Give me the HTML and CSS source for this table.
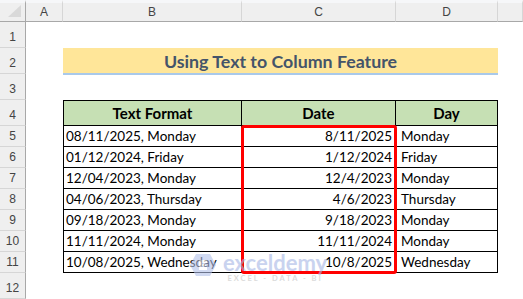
FILE: index.html
```html
<!DOCTYPE html>
<html lang="en">
<head>
    <meta charset="UTF-8">
    <meta name="viewport" content="width=device-width, initial-scale=1.0">
    <title>Using Text to Column Feature</title>
    <link rel="stylesheet" href="styles.css">
</head>
<body>
    <div class="sheet">
        <!-- column headers -->
        <div class="corner">
            <svg width="14" height="13" viewBox="0 0 14 13"><polygon points="13,0 13,12 0,12" fill="#d9d9d9"/></svg>
        </div>
        <div class="col-head">A</div>
        <div class="col-head">B</div>
        <div class="col-head">C</div>
        <div class="col-head">D</div>
        <div class="col-head"></div>

        <div class="row-head">1</div>

        <div class="row-head">2</div>
        <div class="title">Using Text to Column Feature</div>

        <div class="row-head">3</div>

        <div class="row-head">4</div>
        <div class="cell col-b th">Text Format</div>
        <div class="cell col-c th">Date</div>
        <div class="cell col-d th">Day</div>

        <div class="row-head">5</div>
        <div class="cell col-b">08/11/2025, Monday</div>
        <div class="cell col-c">8/11/2025</div>
        <div class="cell col-d">Monday</div>

        <div class="row-head">6</div>
        <div class="cell col-b">01/12/2024, Friday</div>
        <div class="cell col-c">1/12/2024</div>
        <div class="cell col-d">Friday</div>

        <div class="row-head">7</div>
        <div class="cell col-b">12/04/2023, Monday</div>
        <div class="cell col-c">12/4/2023</div>
        <div class="cell col-d">Monday</div>

        <div class="row-head">8</div>
        <div class="cell col-b">04/06/2023, Thursday</div>
        <div class="cell col-c">4/6/2023</div>
        <div class="cell col-d">Thursday</div>

        <div class="row-head">9</div>
        <div class="cell col-b">09/18/2023, Monday</div>
        <div class="cell col-c">9/18/2023</div>
        <div class="cell col-d">Monday</div>

        <div class="row-head">10</div>
        <div class="cell col-b">11/11/2024, Monday</div>
        <div class="cell col-c">11/11/2024</div>
        <div class="cell col-d">Monday</div>

        <div class="row-head">11</div>
        <div class="cell col-b">10/08/2025, Wednesday</div>
        <div class="cell col-c">10/8/2025</div>
        <div class="cell col-d">Wednesday</div>

        <div class="row-head">12</div>

        <!-- overlays -->
        <div class="watermark">
            <svg class="wm-icon" width="26" height="24" viewBox="0 0 26 24">
                <polygon points="6,1 20,1 26,12 20,23 6,23 0,12" fill="#b4c2ea"/>
                <polygon points="9,7 17,7 17,10 12,10 12,11 16,11 16,13 12,13 12,14 17,14 17,17 9,17" fill="#fff"/>
            </svg>
            <div class="wm-text">
                <span class="wm-name">exceldemy</span>
                <span class="wm-tag">EXCEL - DATA - BI</span>
            </div>
        </div>
        <div class="highlight"></div>
    </div>
</body>
</html>
```

FILE: styles.css
```css
* {
    margin: 0;
    padding: 0;
    box-sizing: border-box;
}

body {
    background: #fff;
    overflow: hidden;
    font-family: 'Lato', 'Liberation Sans', sans-serif;
    color: #000;
}

.sheet {
    position: relative;
    display: grid;
    grid-template-columns: 26px 37px 179px 154px 102px 1fr;
    grid-template-rows: 22px 26px 26px 26px 26px repeat(7, 21px) 26px;
    width: 523px;
    height: 299px;
}

/* headers */
.corner,
.col-head {
    background: #efefef;
    border-top: 3px solid #f6f7f9;
    border-bottom: 1px solid #a8a8a8;
    border-right: 1px solid #d6d6d6;
}

.corner {
    border-right: 1px solid #a8a8a8;
    display: flex;
    justify-content: flex-end;
    align-items: flex-end;
    padding: 0 3px 3px 0;
}

.col-head {
    display: flex;
    justify-content: center;
    align-items: center;
    font-family: 'Liberation Sans', sans-serif;
    font-size: 12px;
    color: #444;
}

.row-head {
    grid-column: 1;
    background: #efefef;
    border-right: 1px solid #a8a8a8;
    border-bottom: 1px solid #d6d6d6;
    display: flex;
    justify-content: center;
    align-items: flex-end;
    padding-bottom: 3px;
    font-family: 'Liberation Sans', sans-serif;
    font-size: 12px;
    color: #444;
}

/* title */
.title {
    grid-column: 3 / 6;
    background: #ffe699;
    border-bottom: 2px solid #a9c9ea;
    display: flex;
    justify-content: center;
    align-items: center;
    font-size: 17.8px;
    font-weight: 700;
    color: #44546a;
    margin-bottom: -1px;
}

/* table */
.cell {
    border-right: 1px solid #000;
    border-bottom: 1px solid #000;
    display: flex;
    align-items: flex-end;
    font-size: 13.5px;
    line-height: 18px;
    padding-bottom: 1px;
    white-space: nowrap;
}

.col-b {
    grid-column: 3;
    border-left: 1px solid #000;
    padding-left: 2px;
}

.col-c {
    grid-column: 4;
    justify-content: flex-end;
    padding-right: 3px;
}

.col-d {
    grid-column: 5;
    padding-left: 5px;
}

.cell.th {
    background: #c6e0b4;
    border-top: 1px solid #000;
    justify-content: center;
    align-items: center;
    padding: 0;
    font-size: 15px;
    font-weight: 700;
}

/* overlays: positioned against their grid area */
.highlight {
    position: absolute;
    grid-column: 4 / 5;
    grid-row: 6 / 13;
    inset: -1px;
    border: 3px solid #ff0000;
    border-radius: 3px;
}

.watermark {
    position: absolute;
    grid-column: 3 / 5;
    grid-row: 12 / 14;
    top: 0;
    left: 127px;
    display: flex;
    align-items: flex-start;
    gap: 7px;
    z-index: 1;
    opacity: 0.6;
}

.wm-icon {
    margin-top: 1px;
}

.wm-text {
    display: flex;
    flex-direction: column;
    align-items: center;
}

.wm-name {
    font-size: 22px;
    font-weight: 700;
    line-height: 22px;
    color: #a6b6e6;
}

.wm-tag {
    font-size: 7.5px;
    font-weight: 700;
    letter-spacing: 2px;
    line-height: 9px;
    color: #c4c4c4;
}
```
